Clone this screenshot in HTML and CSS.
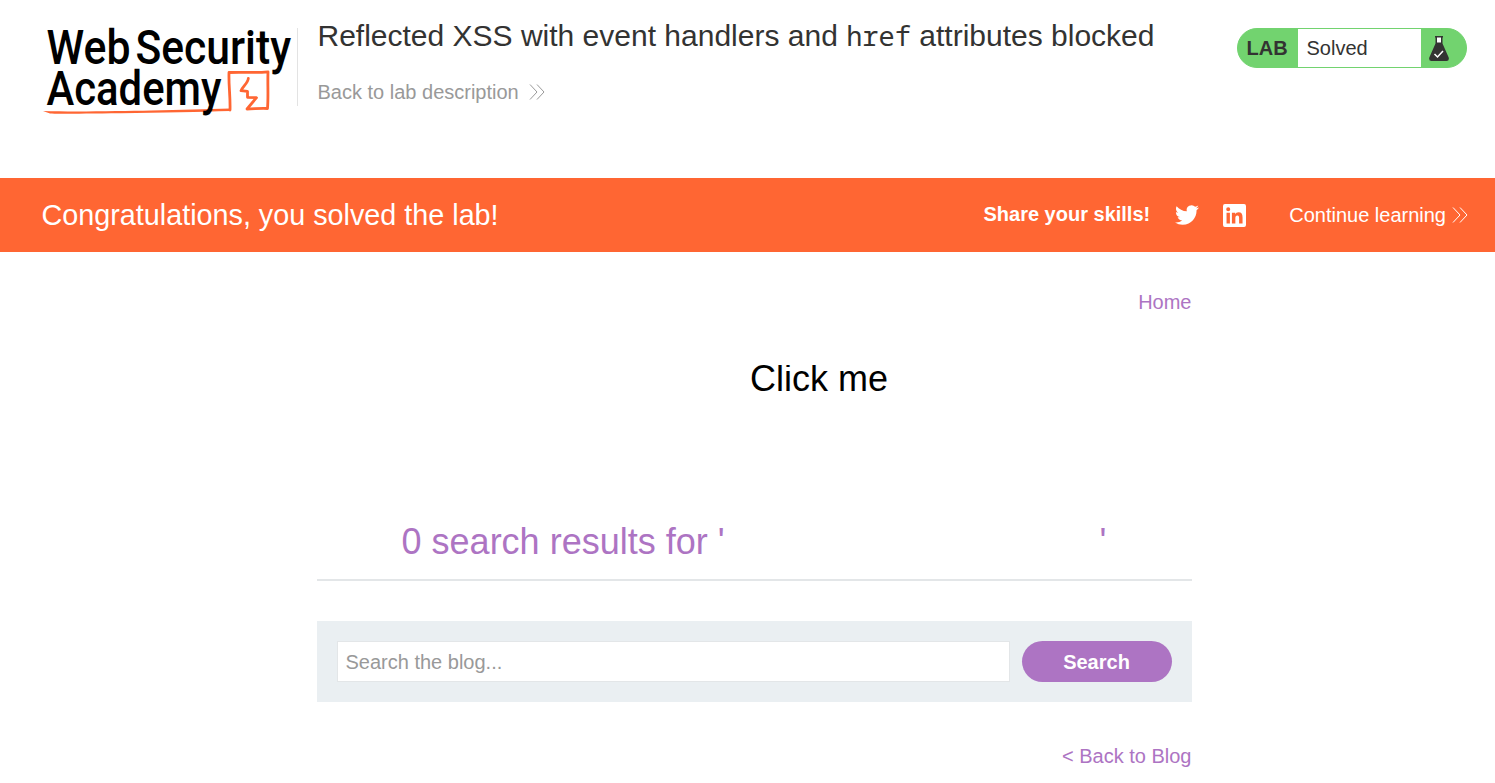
FILE: index.html
```html
<!DOCTYPE html>
<html lang="en">
<head>
<meta charset="utf-8">
<title>Reflected XSS with event handlers and href attributes blocked</title>
<link rel="stylesheet" href="styles.css">
</head>
<body>
<header class="lab-header">
  <svg class="logo" viewBox="0 0 260 100" role="img" aria-label="Web Security Academy">
    <path class="logo-line" d="M2 91 C35 92 80 91 110 90.500 S165 89 189 88.500 L189 91 C160 92 120 92.800 80 93.200 S15 94 9 93.500Z"/>
    <path class="logo-box" d="M189 90 C189.500 77 187.500 65 188 52.500 C201 52 214 53 227 51.800 C226.500 64 227.500 76 226.500 88.500 C219 88 213 89 206 89 L215.500 77.700 L206.500 77.300 L206.500 71.300 L200 70.700 C202 66 207 63 207.300 58.500"/>
    <g class="logo-text">
      <text x="5.500" y="44" textLength="84" lengthAdjust="spacingAndGlyphs">Web</text>
      <text x="94.500" y="44" textLength="155.500" lengthAdjust="spacingAndGlyphs">Security</text>
      <text x="5.500" y="85" textLength="175" lengthAdjust="spacingAndGlyphs">Academy</text>
    </g>
  </svg>
  <div class="title-block">
    <h2 class="lab-title">Reflected XSS with event handlers and <code>href</code> attributes blocked</h2>
    <a class="back-link">Back to lab description
      <svg class="chevrons" viewBox="0 0 16 16"><path d="M1 .5 8 8 1 15.500M8 .5 15 8 8 15.500"/></svg>
    </a>
  </div>
  <div class="status">
    <span class="status-label">LAB</span>
    <span class="status-value">Solved</span>
    <span class="status-icon">
      <svg class="flask" viewBox="0 0 20 26">
        <path class="flask-neck" d="M7 1H13V8H7Z"/>
        <path class="flask-body" d="M6 0H14V1.500H13.500V7.500L19.700 21.500Q20.500 25 17.500 25H2.500Q-.5 25 .3 21.500L6.500 7.500V1.500H6ZM8 1.500V6.500H12V1.500Z" fill-rule="evenodd"/>
        <path class="flask-check" d="M5.500 18 8.500 21 14 15"/>
      </svg>
    </span>
  </div>
</header>
<section class="banner">
  <h4 class="banner-title">Congratulations, you solved the lab!</h4>
  <div class="banner-share">
    <b class="share-label">Share your skills!</b>
    <svg class="twitter" viewBox="0 0 24 24"><path d="M23.953 4.570a10 10 0 01-2.825.775 4.958 4.958 0 002.163-2.723c-.951.555-2.005.959-3.127 1.184a4.920 4.920 0 00-8.384 4.482C7.690 8.095 4.067 6.130 1.640 3.162a4.822 4.822 0 00-.666 2.475c0 1.710.870 3.213 2.188 4.096a4.904 4.904 0 01-2.228-.616v.060a4.923 4.923 0 003.946 4.827 4.996 4.996 0 01-2.212.085 4.936 4.936 0 004.604 3.417 9.867 9.867 0 01-6.102 2.105c-.390 0-.779-.023-1.170-.067a13.995 13.995 0 007.557 2.209c9.053 0 13.998-7.496 13.998-13.985 0-.210 0-.420-.015-.630A9.935 9.935 0 0024 4.590z"/></svg>
    <svg class="linkedin" viewBox="0 0 24 24"><path fill-rule="evenodd" d="M2 0H22Q24 0 24 2V22Q24 24 22 24H2Q0 24 0 22V2Q0 0 2 0ZM3.700 9V20.300H7.200V9ZM5.450 3.300A2.100 2.100 0 105.450 7.500 2.100 2.100 0 105.450 3.300ZM9.300 9V20.300H12.900V14.700C12.900 13 13.500 11.900 15 11.900S16.800 13.200 16.800 14.800V20.300H20.400V14.100C20.400 10.700 19.300 8.700 16.300 8.700 14.500 8.700 13.300 9.600 12.700 10.600V9Z"/></svg>
    <a class="continue">Continue learning
      <svg class="chevrons" viewBox="0 0 16 16"><path d="M1 .5 8 8 1 15.500M8 .5 15 8 8 15.500"/></svg>
    </a>
  </div>
</section>
<main class="content">
  <nav class="top-nav"><a>Home</a></nav>
  <h1 class="results">0 search results for '<svg class="result-graphic"><text x="25" y="26">Click me</text></svg>'</h1>
  <form class="search">
    <input class="search-input" type="text" placeholder="Search the blog...">
    <button class="search-button" type="button">Search</button>
  </form>
  <div class="back-row"><a>&lt; Back to Blog</a></div>
</main>
</body>
</html>
```
FILE: styles.css
```css
* { box-sizing: border-box; }
body {
  margin: 0;
  background: #fff;
  color: #333332;
  font: 20px/25px "Liberation Sans", Arial, sans-serif;
  overflow: hidden;
}
h1, h2, h4 { margin: 0; font-weight: 400; }
.lab-header {
  display: flex;
  align-items: flex-start;
  height: 178px;
  padding: 20px 28px 0 41px;
}
.logo { width: 260px; height: 100px; flex: none; overflow: visible; }
.logo-line { fill: #ff6633; }
.logo-box { fill: none; stroke: #ff6633; stroke-width: 2.8; stroke-linejoin: round; stroke-linecap: round; }
.logo-text { font: 500 48px Roboto, sans-serif; fill: #000; }
.title-block {
  height: 78px;
  margin: 8px 0 0 -4px;
  padding-left: 19.5px;
  border-left: 1px solid #e3e3e3;
}
.lab-title { margin-top: -10px; font-size: 30px; line-height: 36px; white-space: nowrap; }
.lab-title code { font-family: "Noto Sans Mono", "DejaVu Sans Mono", monospace; font-size: 27px; }
.back-link { display: flex; align-items: center; gap: 10px; margin-top: 26px; color: #999; }
.back-link .chevrons { margin-top: -2px; }
.chevrons { width: 16px; height: 16px; fill: none; stroke: currentColor; stroke-width: 1; }
.status {
  display: flex;
  width: 230px;
  height: 40px;
  margin: 8px 0 0 auto;
  border: 1px solid #72d36f;
  border-radius: 20px;
  overflow: hidden;
  background: #72d36f;
  line-height: 38px;
}
.status-label { width: 60px; padding-left: 8.5px; font-weight: 700; }
.status-value { width: 123px; padding-left: 8.5px; background: #fff; }
.status-icon { padding: 7px 0 0 8px; display: flex; }
.flask { width: 20px; height: 26px; }
.flask-neck { fill: #fff; }
.flask-body { fill: #333332; }
.flask-check { fill: none; stroke: #fff; stroke-width: 1.5; }
.banner {
  display: flex;
  align-items: center;
  justify-content: space-between;
  height: 74px;
  padding: 0 27px 0 41.5px;
  background: #ff6633;
  color: #fff;
}
.banner-title { font-size: 28.75px; }
.banner-share { display: flex; align-items: center; }
.share-label { padding-bottom: 2px; }
.twitter, .linkedin { fill: #fff; flex: none; }
.twitter { width: 24px; height: 24px; margin-left: 25px; }
.linkedin { width: 23px; height: 23px; margin: 0 43px 0 24px; }
.continue { display: flex; align-items: center; gap: 6px; }
.content { width: 875px; margin: 0 auto 0 317px; color: #ad74c3; }
.top-nav { padding: 38px 0.5px 0 0; text-align: right; }
.results {
  height: 266px;
  padding: 50px 1px 0 0;
  border-bottom: 2px solid #e3e6e8;
  font-size: 36px;
  line-height: 41px;
  text-align: center;
  white-space: nowrap;
}
.result-graphic { width: 375px; height: 189px; fill: #000; }
.search {
  display: flex;
  gap: 12px;
  height: 81px;
  margin-top: 40px;
  padding: 20px;
  background: #eaeff2;
}
.search-input {
  flex: 1;
  min-width: 0;
  padding: 2px 7.5px 0;
  border: 1px solid #e3e6e8;
  font: inherit;
}
.search-input::placeholder { color: #999; opacity: 1; }
.search-button {
  width: 150px;
  padding: 2px 7px 0 6px;
  border: 0;
  border-radius: 21px;
  background: #ad74c3;
  color: #fff;
  font: inherit;
  font-weight: 700;
}
.back-row { margin-top: 42px; padding-right: 0.5px; text-align: right; }
```
